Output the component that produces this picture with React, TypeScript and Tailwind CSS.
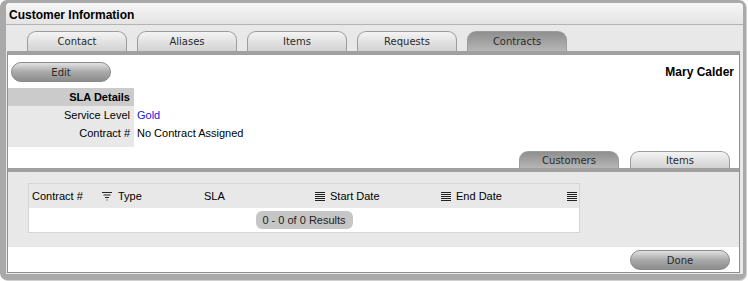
import React from 'react';

const sans = { fontFamily: '"Liberation Sans", Arial, sans-serif' };
const lucida = { fontFamily: '"DejaVu Sans", Verdana, sans-serif' };

function SortIcon() {
  return (
    <svg width="10" height="9" viewBox="0 0 10 9" className="shrink-0">
      {[0, 2, 4, 6, 8].map((y) => (
        <rect key={y} x="0" y={y} width="10" height="1" fill="#222" />
      ))}
    </svg>
  );
}

function FilterIcon() {
  return (
    <svg width="10" height="9" viewBox="0 0 10 9" className="shrink-0">
      <rect x="0" y="0" width="10" height="1" fill="#222" />
      <rect x="1.5" y="2.5" width="7" height="1" fill="#222" />
      <rect x="3" y="5" width="4" height="1" fill="#222" />
      <rect x="4.5" y="7.5" width="1" height="1" fill="#222" />
    </svg>
  );
}

function Tab({ label, active }: { label: string; active?: boolean }) {
  return (
    <div
      style={lucida}
      className={
        'flex w-[100px] items-center justify-center rounded-t-[9px] border border-b-0 border-[#9c9c9c] text-[10px] text-[#2a2a2a] ' +
        (active ? 'bg-gradient-to-b from-[#8f8f8f] to-[#b6b6b6]' : 'bg-gradient-to-b from-[#f4f4f4] to-[#d2d2d2]')
      }
    >
      {label}
    </div>
  );
}

function PillButton({ label }: { label: string }) {
  return (
    <button
      style={lucida}
      className="h-[20px] w-[100px] rounded-full border border-[#8a8a8a] bg-gradient-to-b from-[#e2e2e2] via-[#a9a9a9] to-[#8d8d8d] text-[10px] text-[#2a2a2a]"
    >
      {label}
    </button>
  );
}

export default function App() {
  return (
    <div className="h-[281px] w-[748px] bg-white">
      <div className="flex h-[280px] w-[746px] flex-col rounded-[7px] bg-[#a9a9a9] pt-[3px] pr-[3px] pb-[6px] pl-[6px] shadow-[1px_1px_0_#d0d0d0]">
        <div className="flex flex-1 flex-col rounded-t-[4px] bg-[#e8e8e8]">
          {/* title */}
          <div
            style={sans}
            className="flex h-[22px] items-center rounded-t-[4px] border-b border-[#b4b4b4] bg-gradient-to-b from-[#f6f6f6] to-[#e4e4e4] pt-[2px] pl-[3px] text-[12px] font-bold text-black"
          >
            Customer Information
          </div>

          {/* main tabs */}
          <div className="flex h-[26px] items-end pl-[21px]">
            <div className="flex h-[20px] gap-[10px]">
              <Tab label="Contact" />
              <Tab label="Aliases" />
              <Tab label="Items" />
              <Tab label="Requests" />
              <Tab label="Contracts" active />
            </div>
          </div>

          {/* content */}
          <div className="mr-[3px] ml-[1px] flex flex-col border border-t-[4px] border-[#8f8f8f] border-t-[#a0a0a0] bg-white">
            <div className="flex items-center justify-between pt-[7px] pr-[5px] pl-[3px]">
              <PillButton label="Edit" />
              <span style={sans} className="text-[12px] font-bold text-black">
                Mary Calder
              </span>
            </div>

            <div style={sans} className="mt-[6px] flex h-[59px] text-[11px] text-black">
              <div className="flex w-[126px] flex-col bg-[#e8e8e8]">
                <div className="flex h-[18px] items-center justify-end bg-[#cbcbcb] pr-[4px] font-bold">SLA Details</div>
                <div className="flex h-[18px] items-center justify-end pr-[4px]">Service Level</div>
                <div className="flex h-[18px] items-center justify-end pr-[4px]">Contract #</div>
              </div>
              <div className="flex flex-col pl-[3px]">
                <div className="h-[18px]" />
                <div className="flex h-[18px] items-center text-[#1414e6]">Gold</div>
                <div className="flex h-[18px] items-center">No Contract Assigned</div>
              </div>
            </div>

            {/* sub tabs */}
            <div className="mt-[4px] flex h-[17px] justify-end gap-[11px] pr-[9px]">
              <Tab label="Customers" active />
              <Tab label="Items" />
            </div>
            <div className="h-[4px] bg-[#a0a0a0]" />

            <div className="flex h-[75px] bg-[#e8e8e8] pt-[11px] pl-[20px]">
              <div style={sans} className="flex h-[50px] w-[552px] flex-col border border-[#d6d6d6] text-[11px] text-black">
                <div className="flex h-[24px] items-center bg-[#e8e8e8]">
                  <div className="w-[73px] pl-[3px]">Contract #</div>
                  <div className="flex w-[102px] items-center gap-[6px]">
                    <FilterIcon />
                    <span>Type</span>
                  </div>
                  <div className="w-[111px]">SLA</div>
                  <div className="flex w-[126px] items-center gap-[5px]">
                    <SortIcon />
                    <span>Start Date</span>
                  </div>
                  <div className="flex w-[126px] items-center gap-[5px]">
                    <SortIcon />
                    <span>End Date</span>
                  </div>
                  <SortIcon />
                </div>
                <div className="flex flex-1 items-start justify-center bg-white pt-[3px]">
                  <div className="flex h-[18px] w-[97px] items-center justify-center rounded-[6px] bg-[#c6c6c6] text-[#222]">
                    0 - 0 of 0 Results
                  </div>
                </div>
              </div>
            </div>

            <div className="flex h-[25px] items-start justify-end pt-[3px] pr-[9px]">
              <PillButton label="Done" />
            </div>
          </div>
        </div>
      </div>
    </div>
  );
}
